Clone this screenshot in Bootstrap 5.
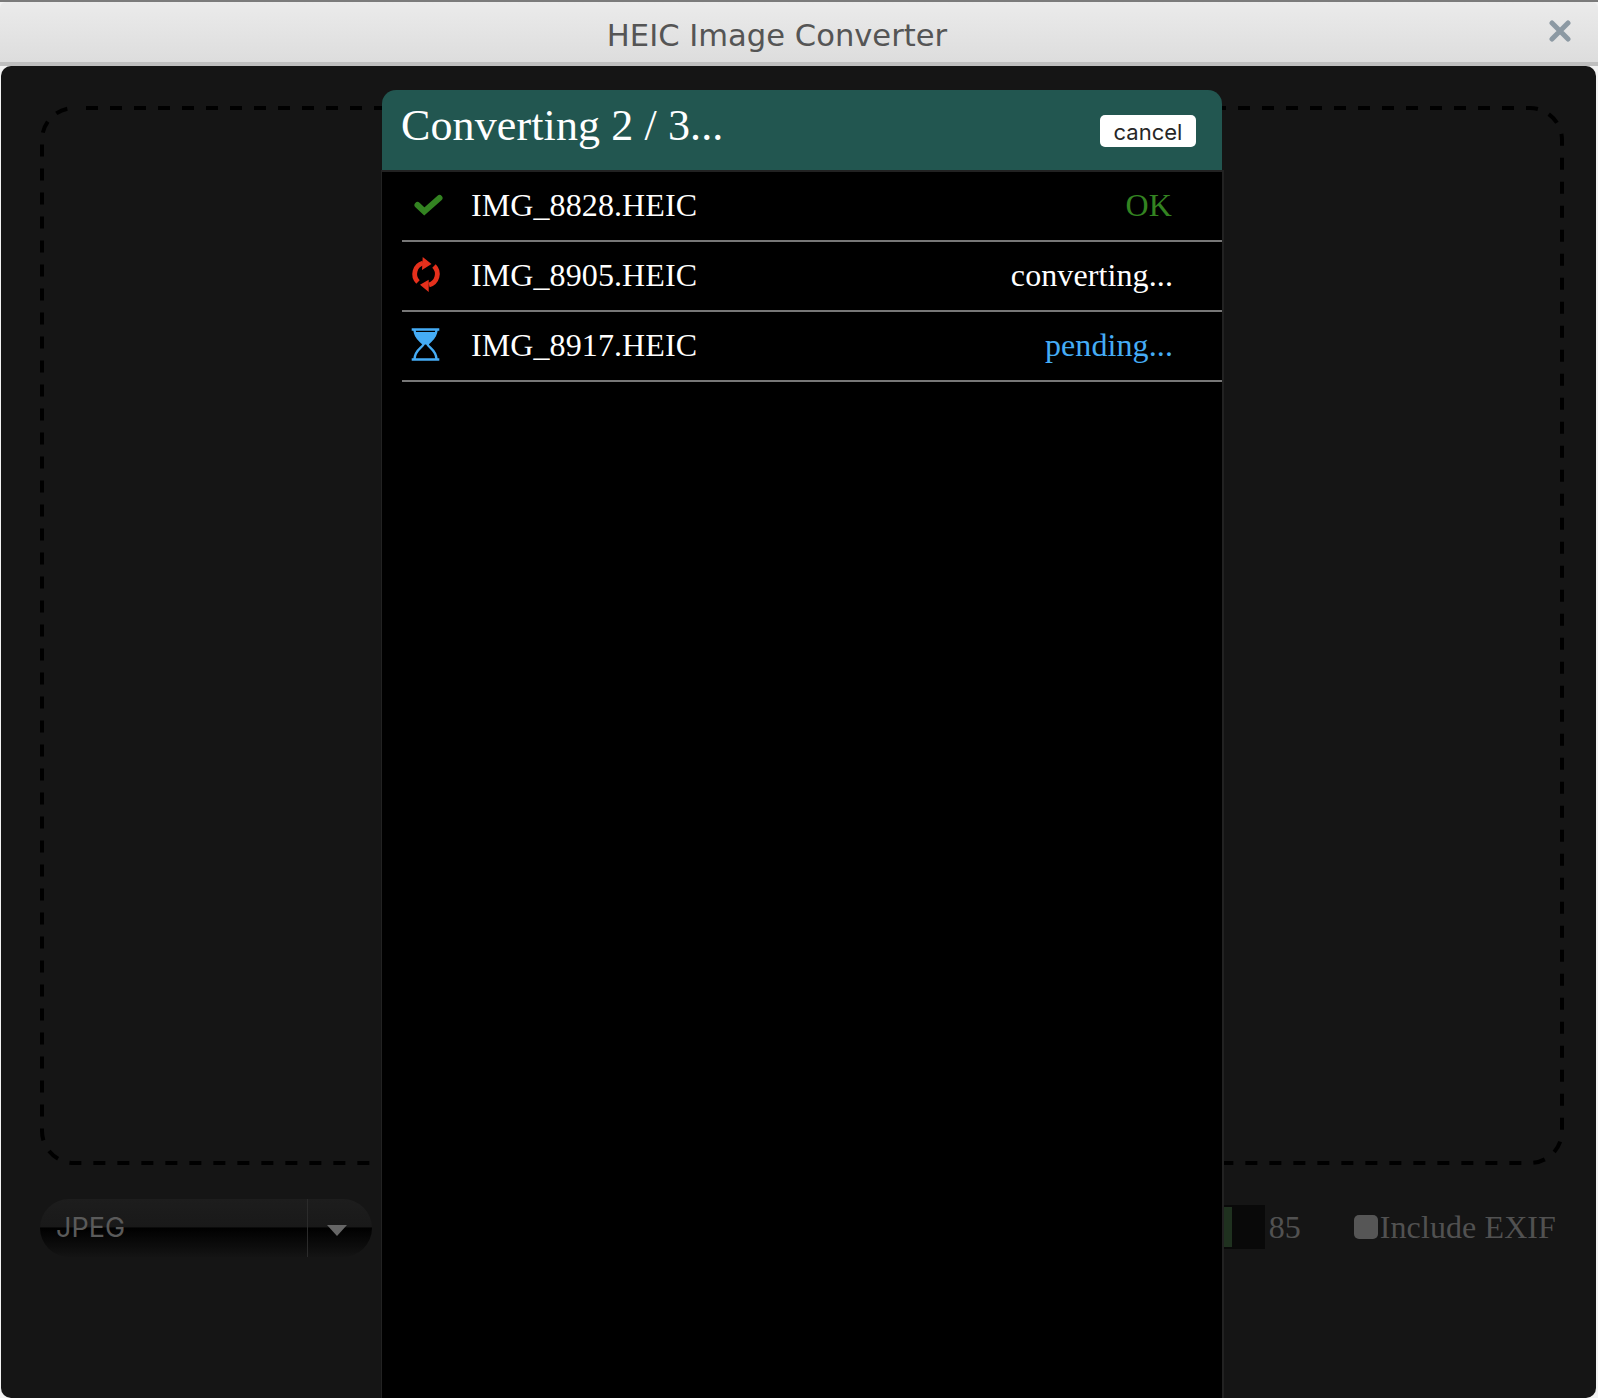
<!DOCTYPE html>
<html lang="en">
<head>
<meta charset="utf-8">
<title>HEIC Image Converter</title>
<link href="https://cdn.jsdelivr.net/npm/bootstrap@5.3.0/dist/css/bootstrap.min.css" rel="stylesheet">
<style>
html,body{height:100%;margin:0;background:#e4e4e4;overflow:hidden}
body{font-family:"Liberation Serif",serif}
.app-shell{width:1598px;height:1398px;display:flex;flex-direction:column;border-top:2px solid #7b7b7b;background:#f2f2f2}
.title-bar{height:60px;flex:none;background:linear-gradient(#ebebeb,#dddddd);border-radius:6px 6px 0 0;color:#555;font-family:"DejaVu Sans",sans-serif;font-size:30.600px;padding-right:44px;padding-top:8px;position:relative}
.title-close{position:absolute;right:27px;top:18px;line-height:0}
.title-rule{height:4px;flex:none;background:#bfbfbf}
.work-area{flex:1;min-height:0;background:#151515;border-radius:10px;margin:0 2px 0 1px;padding:40px 32px 0 39px;position:relative}
.drop-zone{height:1059px;line-height:0}
.drop-zone svg{width:100%;height:100%;display:block}
.tool-row{margin-top:33px;height:60px;color:#515151;padding-right:8px}
.format-pick{width:332px;height:58px;border-radius:29px;background:linear-gradient(#1d1d1d 0,#191919 48%,#000 50%,#141414 100%);font-family:"Inter",sans-serif;font-size:27px;color:#5a5a5a;padding-left:16px}
.format-split{width:1px;height:58px;background:#2b2b2b;margin-left:auto;margin-right:19px}
.format-arrow{width:0;height:0;border-left:10px solid transparent;border-right:10px solid transparent;border-top:11px solid #666;margin-right:25px;margin-top:5px}
.quality-bar{width:41px;height:44px;background:#090909;padding:2px 0;margin-top:-2px}
.quality-fill{width:8px;height:100%;background:#1f311f}
.quality-num{font-size:32px;margin-left:4px;margin-right:53px;margin-top:-3px}
.exif-box{width:24px;height:24px;border-radius:5px;background:#565656;margin-right:2px;margin-top:-2px}
.exif-label{font-size:32px;white-space:nowrap;letter-spacing:.1px;margin-top:-3px}
.convert-dialog{position:absolute;left:380px;top:24px;width:843px;bottom:0;display:flex;flex-direction:column}
.dialog-head{height:80px;flex:none;background:#225650;border-radius:14px 14px 0 0;margin:0 2px 0 1px;color:#fff;font-size:44px;letter-spacing:.12px;padding:0 26px 0 19px}
.dialog-head-text{line-height:1;margin-top:-9px}
.cancel-btn{width:96px;height:32px;padding:0;border:0;border-radius:5px;background:#fff;color:#262626;font-family:"Inter",sans-serif;font-size:22px;line-height:34px;margin-top:2px}
.dialog-body{flex:1;min-height:0;background:#000;border:2px solid #222;border-bottom:0;border-left-width:1px;padding-left:20px}
.job-row{height:70px;border-bottom:2px solid #777;color:#fff;font-size:32px;letter-spacing:.1px;padding-right:49px}
.job-icon{width:48px;flex:none;margin-right:21px;line-height:0}
.job-icon svg{overflow:visible}
.job-name{margin-top:-3px}
.job-state{margin-left:auto;margin-top:-3px}
.state-ok{color:#338321;padding-right:1px}
.state-pending{color:#45acf5}
</style>
</head>
<body>
<div class="app-shell">
  <div class="title-bar d-flex align-items-center justify-content-center">
    <span>HEIC Image Converter</span>
    <span class="title-close"><svg width="22" height="22" viewBox="0 0 22 22"><path d="M3 3 19 19M19 3 3 19" stroke="#8c99a3" stroke-width="5" stroke-linecap="round"/></svg></span>
  </div>
  <div class="title-rule"></div>
  <div class="work-area">
    <div class="drop-zone"><svg viewBox="0 0 1524 1059" preserveAspectRatio="none"><rect x="2" y="2" width="1520" height="1055" rx="32" ry="32" fill="none" stroke="#000" stroke-width="4" stroke-dasharray="12 12" stroke-dashoffset="12"/></svg></div>
    <div class="tool-row d-flex align-items-center">
      <div class="format-pick d-flex align-items-center">
        <span>JPEG</span>
        <span class="format-split"></span>
        <span class="format-arrow"></span>
      </div>
      <div class="quality-bar ms-auto"><div class="quality-fill"></div></div>
      <span class="quality-num">85</span>
      <span class="exif-box"></span>
      <span class="exif-label">Include EXIF</span>
    </div>
    <div class="convert-dialog">
      <div class="dialog-head d-flex align-items-center justify-content-between">
        <span class="dialog-head-text">Converting 2 / 3...</span>
        <button type="button" class="btn cancel-btn">cancel</button>
      </div>
      <div class="dialog-body">
        <div class="job-row d-flex align-items-center">
          <span class="job-icon"><svg width="48" height="32" viewBox="0 0 48 32"><path d="M15.500 15 L22.300 21.500 L37.500 8" fill="none" stroke="#338321" stroke-width="6" stroke-linecap="round"/></svg></span>
          <span class="job-name">IMG_8828.HEIC</span>
          <span class="job-state state-ok">OK</span>
        </div>
        <div class="job-row d-flex align-items-center">
          <span class="job-icon"><svg width="48" height="38" viewBox="0 2 48 38"><g fill="none" stroke="#e5301c" stroke-width="4.800"><path d="M21 8 A11.400 11.400 0 0 0 16 27"/><path d="M27 30 A11.400 11.400 0 0 0 32 11"/></g><path d="M20.700 2 L29.500 9 L20 15Z M26.700 37 L18 29.700 L26.700 24.700Z" fill="#e5301c"/></svg></span>
          <span class="job-name">IMG_8905.HEIC</span>
          <span class="job-state">converting...</span>
        </div>
        <div class="job-row d-flex align-items-center">
          <span class="job-icon"><svg width="48" height="36" viewBox="0 -1 48 36"><path d="M9.700 0.500H37.300M9.700 30.500H37.300" stroke="#45acf5" stroke-width="2.600"/><path d="M12.500 1C13 10 19.500 12 21.500 15.500 19.500 19 13 21 12.500 30M34.500 1C34 10 27.500 12 25.500 15.500 27.500 19 34 21 34.500 30" fill="none" stroke="#45acf5" stroke-width="2.400"/><path d="M12.500 3H34.500C34 10 27 12 25.500 15.500H21.500C20 12 13 10 12.500 3Z" fill="#45acf5"/></svg></span>
          <span class="job-name">IMG_8917.HEIC</span>
          <span class="job-state state-pending">pending...</span>
        </div>
      </div>
    </div>
  </div>
</div>
<script src="https://cdn.jsdelivr.net/npm/bootstrap@5.3.0/dist/js/bootstrap.bundle.min.js"></script>
</body>
</html>
